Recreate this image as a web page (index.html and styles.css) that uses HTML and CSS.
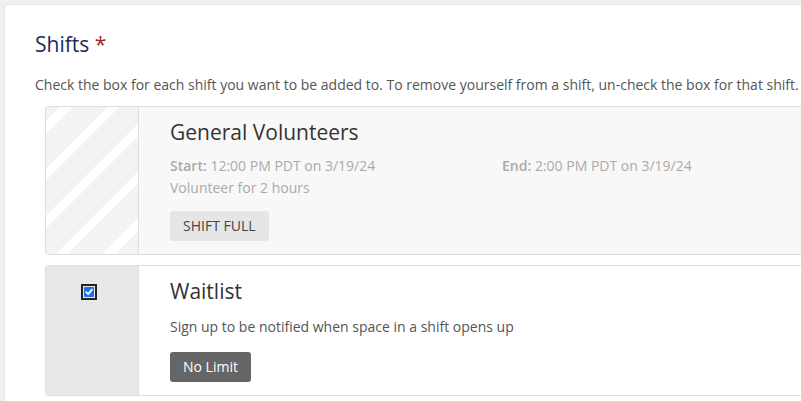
FILE: index.html
```html
<!DOCTYPE html>
<html lang="en">
<head>
<meta charset="utf-8">
<title>Shifts</title>
<link rel="stylesheet" href="styles.css">
</head>
<body>
<div class="card">
  <h2 class="heading">Shifts <span class="req">*</span></h2>
  <p class="intro">Check the box for each shift you want to be added to. To remove yourself from a shift, un-check the box for that shift.</p>
  <div class="shifts">
    <div class="shift shift-full">
      <div class="shift-side striped"></div>
      <div class="shift-body">
        <h3 class="shift-title">General Volunteers</h3>
        <div class="times">
          <span class="time"><b>Start:</b> 12:00 PM PDT on 3/19/24</span>
          <span class="time"><b>End:</b> 2:00 PM PDT on 3/19/24</span>
        </div>
        <div class="muted">Volunteer for 2 hours</div>
        <span class="badge badge-light">SHIFT FULL</span>
      </div>
    </div>
    <div class="shift">
      <div class="shift-side">
        <label class="check">
          <svg width="16" height="16" viewBox="0 0 16 16">
            <rect x="1" y="1" width="14" height="14" fill="none" stroke="#222" stroke-width="2"/>
            <rect x="3" y="3" width="10" height="10" rx="1" fill="#1a73f0"/>
            <path d="M5.2 8.2 L7.2 10.1 L10.9 5.7" fill="none" stroke="#fff" stroke-width="1.8" stroke-linecap="round" stroke-linejoin="round"/>
          </svg>
        </label>
      </div>
      <div class="shift-body white">
        <h3 class="shift-title">Waitlist</h3>
        <div class="desc">Sign up to be notified when space in a shift opens up</div>
        <span class="badge badge-dark">No Limit</span>
      </div>
    </div>
  </div>
</div>
</body>
</html>
```
FILE: styles.css
```css
html, body {
  margin: 0;
  padding: 0;
  background: #f0f0f0;
  font-family: "Open Sans", "Noto Sans", sans-serif;
  overflow: hidden;
}
body {
  padding: 4px 0 0 4px;
}
.card {
  background: #fff;
  border: 1px solid #e2e2e2;
  border-radius: 5px;
  width: 900px;
  height: 500px;
  box-sizing: border-box;
  padding: 25px 0 0 30px;
}
.heading {
  margin: 0;
  font-weight: 400;
  font-size: 21px;
  line-height: 28px;
  color: #1c2b5e;
}
.req {
  color: #a3232c;
}
.intro {
  margin: 17px 0 11px 0;
  font-size: 14px;
  line-height: 20px;
  color: #555;
  white-space: nowrap;
}
.shifts {
  margin-left: 10px;
  display: flex;
  flex-direction: column;
  gap: 10px;
}
.shift {
  display: flex;
  border: 1px solid #dedede;
  border-radius: 3px;
  overflow: hidden;
}
.shift-side {
  width: 93px;
  flex: none;
  border-right: 1px solid #dedede;
  background: #e8e8e8;
  box-sizing: border-box;
  padding: 18px 0 0 35px;
}
.striped {
  background: repeating-linear-gradient(-45deg, #f3f3f3 0 16px, #ffffff 16px 25px, #f3f3f3 25px 33.6px);
}
.shift-body {
  flex: 1;
  display: flex;
  flex-direction: column;
  align-items: flex-start;
  background: #f8f8f8;
  padding: 11px 30px 13px 31px;
}
.shift-body.white {
  background: #fff;
}
.shift-title {
  margin: 0;
  font-weight: 400;
  font-size: 21px;
  line-height: 28px;
  color: #333;
}
.times {
  display: flex;
  margin-top: 10px;
}
.time {
  width: 332px;
  font-size: 14px;
  line-height: 20px;
  color: #aaa;
}
.time b {
  font-weight: 600;
}
.muted {
  font-size: 14px;
  line-height: 24px;
  color: #aaa;
}
.desc {
  margin-top: 12px;
  font-size: 14px;
  line-height: 20px;
  color: #555;
}
.badge {
  display: block;
  margin-top: 11px;
  padding: 0 13px;
  height: 30px;
  line-height: 30px;
  border-radius: 3px;
  font-size: 14px;
}
.badge-light {
  background: #e6e6e6;
  color: #444;
}
.badge-dark {
  background: #666;
  color: #fff;
  margin-top: 15px;
}
.check {
  display: block;
  width: 16px;
  height: 16px;
}
.check svg {
  display: block;
}
```
